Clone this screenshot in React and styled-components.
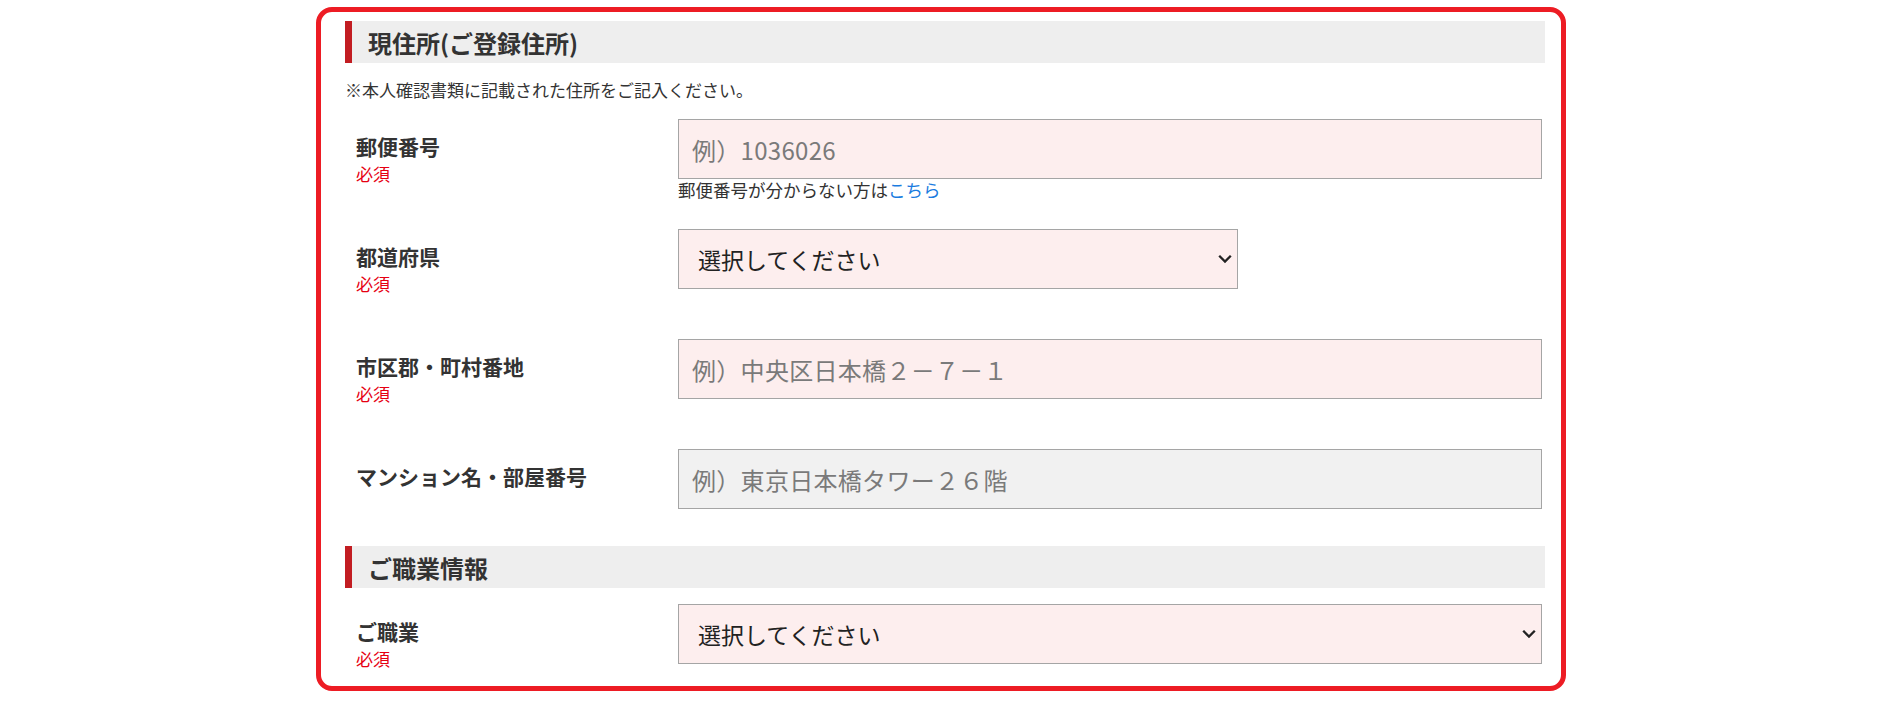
import React from 'react';
import styled, { createGlobalStyle } from 'styled-components';

const GlobalStyle = createGlobalStyle`
  body {
    margin: 0;
    background: #fff;
    font-family: "Noto Sans CJK JP", "Noto Sans", sans-serif;
    color: #333;
  }
`;

// 赤枠
const Frame = styled.div`
  box-sizing: border-box;
  width: 1250px;
  margin: 7px 0 0 316px;
  border: 5px solid #ed1c24;
  border-radius: 16px;
  padding: 9px 16px 15px 24px;
`;

const SectionTitle = styled.h2`
  margin: ${p => (p.$first ? '0' : '37px 0 0')};
  height: 42px;
  display: flex;
  align-items: center;
  box-sizing: border-box;
  background: #eeeeee;
  border-left: 7px solid #c21d22;
  padding-left: 16px;
  font-size: 24px;
  font-weight: 700;
  color: #333;
`;

const Note = styled.p`
  margin: 15px 0 17px;
  font-size: 17px;
  line-height: 24px;
  color: #333;
`;

const FieldList = styled.div`
  display: flex;
  flex-direction: column;
  margin-top: ${p => p.$top || 0}px;
`;

const Row = styled.div`
  display: flex;
  align-items: flex-start;
  min-height: 110px;

  &:last-child {
    min-height: 0;
  }
`;

const LabelCol = styled.div`
  box-sizing: border-box;
  width: 333px;
  flex: none;
  padding: 14px 0 0 11px;
`;

const LabelText = styled.div`
  font-size: 21px;
  line-height: 27px;
  font-weight: 700;
  color: #333;
`;

const Required = styled.div`
  margin-top: 2px;
  font-size: 17px;
  line-height: 24px;
  color: #e60012;
`;

const FieldCol = styled.div`
  flex: 1;
`;

const TextInput = styled.input`
  display: block;
  box-sizing: border-box;
  width: 864px;
  height: 60px;
  margin: 0;
  border: 1px solid #a5a5a5;
  border-radius: 0;
  background: ${p => (p.$optional ? '#f1f1f1' : '#fdeeee')};
  padding: 0 13px;
  font-family: inherit;
  font-size: 24px;
  letter-spacing: 0.3px;
  color: #333;
  outline: none;

  &::placeholder {
    color: #7a7a7a;
    opacity: 1;
  }
`;

const SelectBox = styled.div`
  position: relative;
  width: ${p => p.$w}px;
`;

const Select = styled.select`
  display: block;
  box-sizing: border-box;
  appearance: none;
  width: 100%;
  height: 60px;
  margin: 0;
  border: 1px solid #a5a5a5;
  border-radius: 0;
  background: #fdeeee;
  padding: 0 0 0 19px;
  font-family: inherit;
  font-size: 23px;
  color: #222;
  outline: none;
`;

const Chevron = styled.svg`
  position: absolute;
  right: 6px;
  top: 50%;
  transform: translateY(-50%);
  pointer-events: none;
`;

const Help = styled.div`
  font-size: 17.5px;
  line-height: 22px;
  color: #333;

  a {
    color: #1a7ce0;
    text-decoration: none;
  }
`;

const Field = ({ label, required, children }) => (
  <Row>
    <LabelCol>
      <LabelText>{label}</LabelText>
      {required && <Required>必須</Required>}
    </LabelCol>
    <FieldCol>{children}</FieldCol>
  </Row>
);

const Dropdown = ({ width }) => (
  <SelectBox $w={width}>
    <Select defaultValue="">
      <option value="">選択してください</option>
    </Select>
    <Chevron width="14" height="9" viewBox="0 0 14 9">
      <path d="M1.2 1.2 L7 7 L12.8 1.2" fill="none" stroke="#222" strokeWidth="2.3" />
    </Chevron>
  </SelectBox>
);

export default function App() {
  return (
    <>
      <GlobalStyle />
      <Frame>
        <SectionTitle $first>現住所(ご登録住所)</SectionTitle>
        <Note>※本人確認書類に記載された住所をご記入ください。</Note>
        <FieldList>
          <Field label="郵便番号" required>
            <TextInput placeholder="例）1036026" />
            <Help>
              郵便番号が分からない方は<a href="#">こちら</a>
            </Help>
          </Field>
          <Field label="都道府県" required>
            <Dropdown width={560} />
          </Field>
          <Field label="市区郡・町村番地" required>
            <TextInput placeholder="例）中央区日本橋２－７－１" />
          </Field>
          <Field label="マンション名・部屋番号">
            <TextInput $optional placeholder="例）東京日本橋タワー２６階" />
          </Field>
        </FieldList>

        <SectionTitle>ご職業情報</SectionTitle>
        <FieldList $top={16}>
          <Field label="ご職業" required>
            <Dropdown width={864} />
          </Field>
        </FieldList>
      </Frame>
    </>
  );
}
